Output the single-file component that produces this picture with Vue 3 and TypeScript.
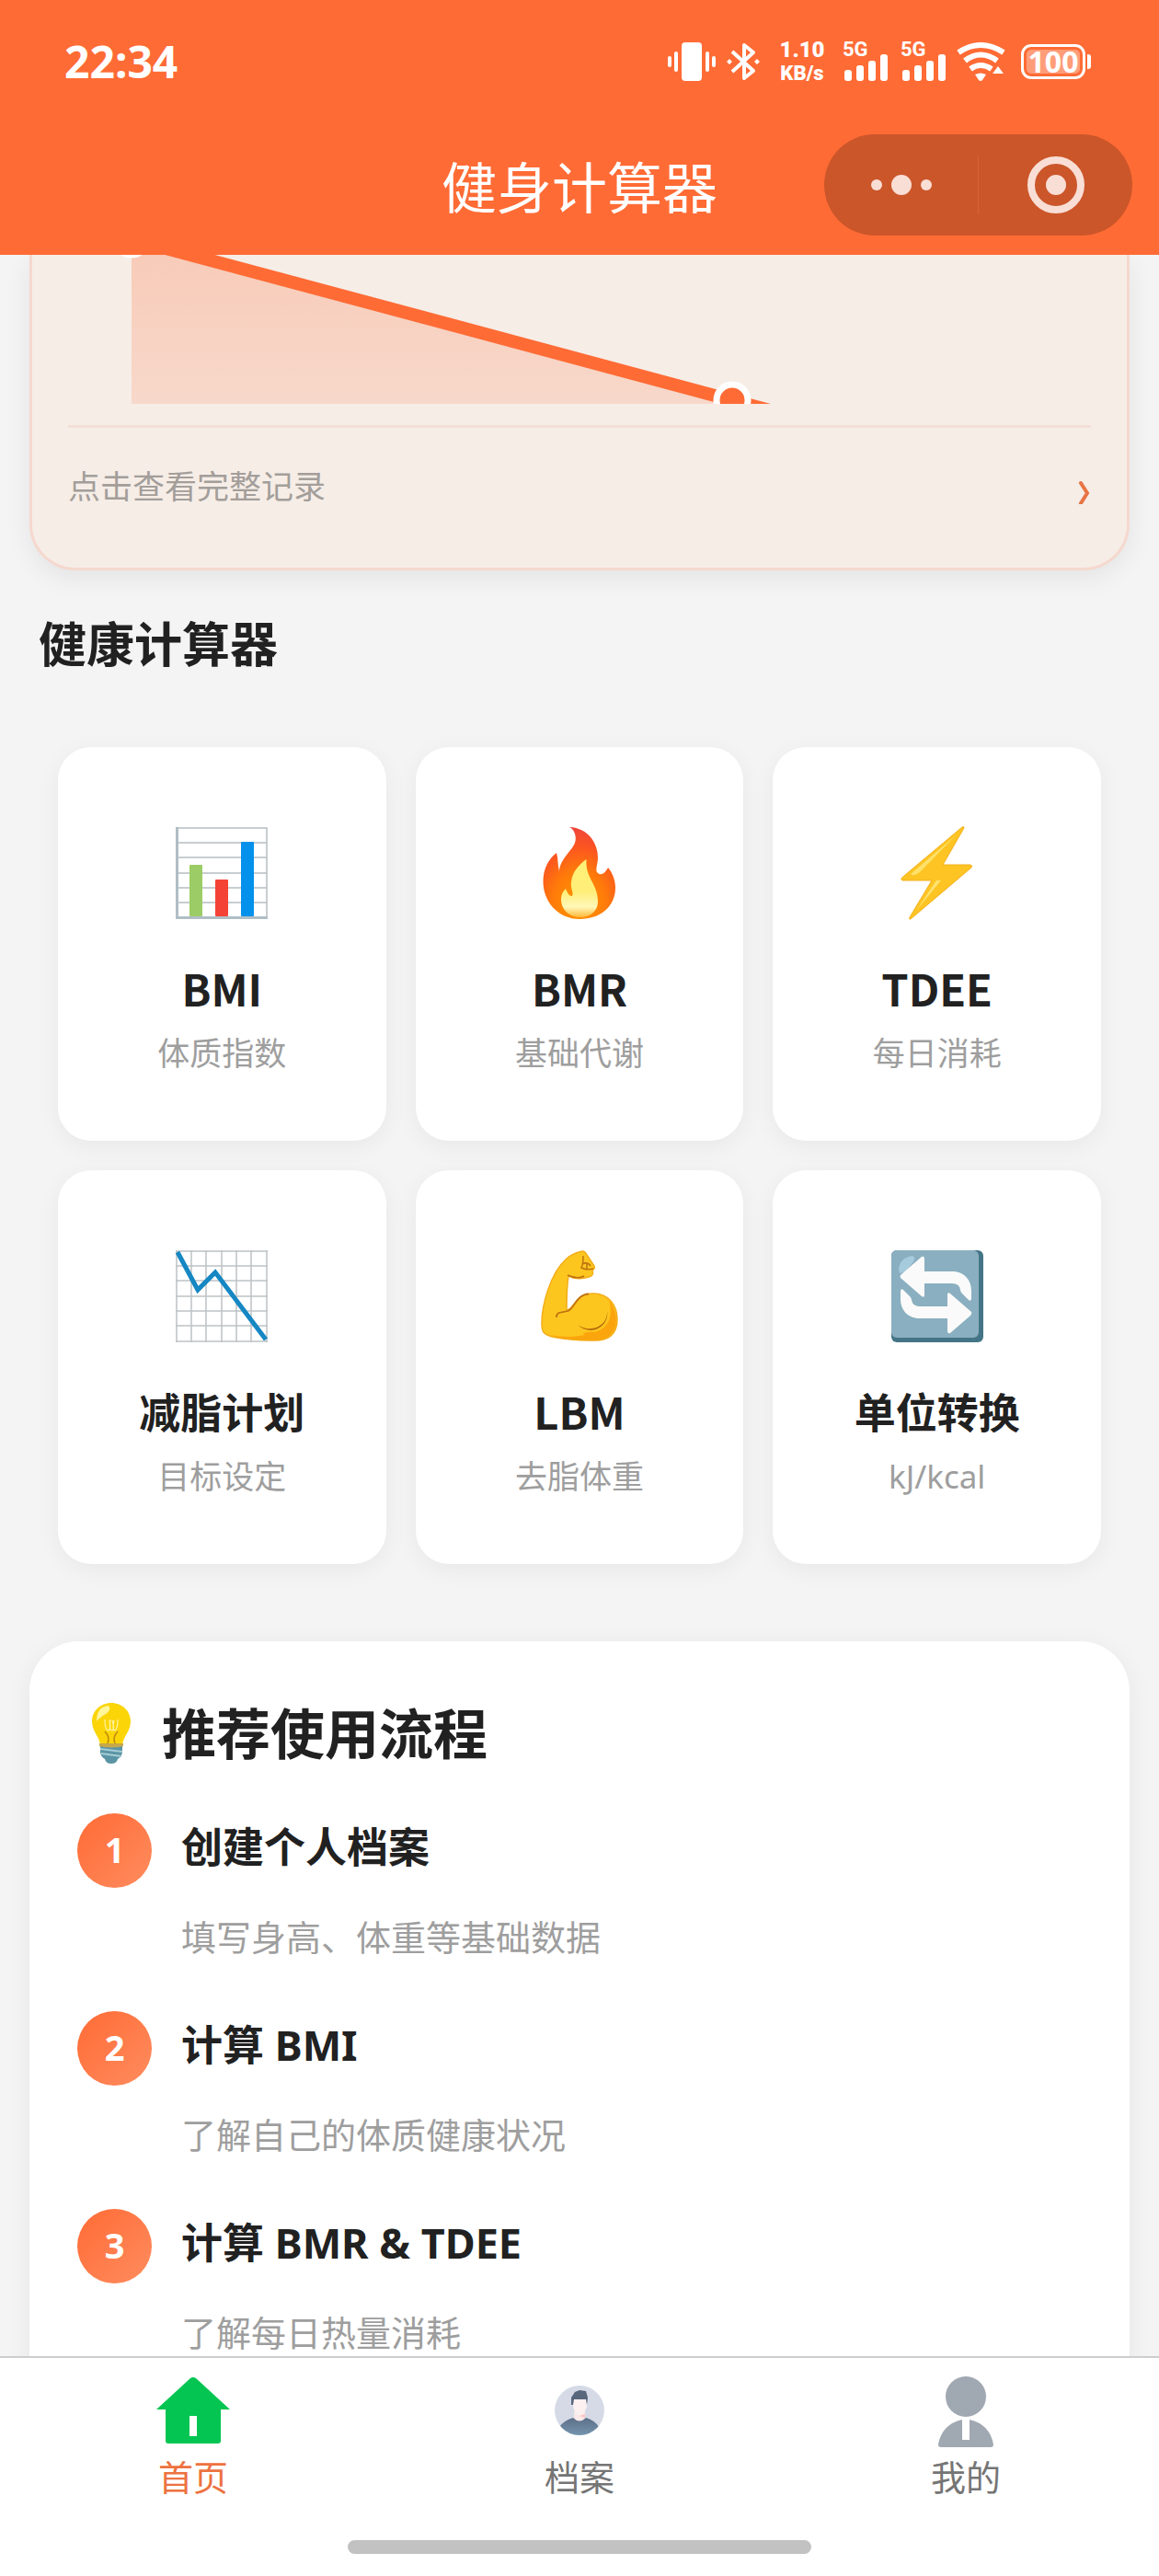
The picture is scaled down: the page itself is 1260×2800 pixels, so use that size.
<script setup lang="ts">
import { ref } from 'vue'

type IconName = 'bars' | 'fire' | 'bolt' | 'trend' | 'arm' | 'swap'

interface Tool {
  icon: IconName
  name: string
  hint: string
  latin?: boolean
}

interface Step {
  title: string
  text: string
}

interface Tab {
  key: 'home' | 'profile' | 'mine'
  label: string
}

const tools: Tool[] = [
  { icon: 'bars', name: 'BMI', hint: '体质指数', latin: true },
  { icon: 'fire', name: 'BMR', hint: '基础代谢', latin: true },
  { icon: 'bolt', name: 'TDEE', hint: '每日消耗', latin: true },
  { icon: 'trend', name: '减脂计划', hint: '目标设定' },
  { icon: 'arm', name: 'LBM', hint: '去脂体重', latin: true },
  { icon: 'swap', name: '单位转换', hint: 'kJ/kcal' },
]

const steps: Step[] = [
  { title: '创建个人档案', text: '填写身高、体重等基础数据' },
  { title: '计算 BMI', text: '了解自己的体质健康状况' },
  { title: '计算 BMR & TDEE', text: '了解每日热量消耗' },
]

const tabs: Tab[] = [
  { key: 'home', label: '首页' },
  { key: 'profile', label: '档案' },
  { key: 'mine', label: '我的' },
]

const activeTab = ref<Tab['key']>('home')
const gridLines = [1, 17, 33, 50, 66, 82, 99]
</script>

<template>
  <div class="app">
    <header class="header">
      <div class="status">
        <span class="clock">22:34</span>
        <div class="status-icons">
          <svg class="vibrate" width="52" height="42" viewBox="0 0 52 42" fill="#fff" aria-hidden="true">
            <rect x="15" y="0" width="22" height="42" rx="4" />
            <rect x="7" y="10" width="4" height="22" rx="2" />
            <rect x="41" y="10" width="4" height="22" rx="2" />
            <rect x="0" y="15" width="4" height="12" rx="2" />
            <rect x="48" y="15" width="4" height="12" rx="2" />
          </svg>
          <svg class="bluetooth" width="36" height="42" viewBox="0 0 36 42" aria-hidden="true">
            <path d="M6 10 L29 31 L19 39 V3 L29 11 L6 32" fill="none" stroke="#fff" stroke-width="4" stroke-linejoin="round" />
            <path d="M3 18 l3 3 -3 3 -3 -3z M33 18 l3 3 -3 3 -3 -3z" fill="#fff" />
          </svg>
          <span class="speed"><b>1.10</b><b>KB/s</b></span>
          <span v-for="n in 2" :key="n" class="signal">
            <b>5G</b>
            <svg width="48" height="29" viewBox="0 0 48 29" fill="#fff" aria-hidden="true">
              <rect x="0" y="17" width="8" height="12" rx="3" />
              <rect x="13" y="12" width="8" height="17" rx="3" />
              <rect x="26" y="7" width="8" height="22" rx="3" />
              <rect x="39" y="0" width="8" height="29" rx="3" />
            </svg>
          </span>
          <svg class="wifi" width="54" height="42" viewBox="0 0 54 42" aria-hidden="true">
            <g fill="none" stroke="#fff" stroke-width="6">
              <path d="M2 11 Q26 -5 51 11" />
              <path d="M9 20 Q26 7 44 20" />
              <path d="M15 29 Q26 21 38 29" />
            </g>
            <path d="M20 35 Q26 32 32 35 L28 41 Q26 43 24 41z M45 26 l6 8 h-12z" fill="#fff" />
          </svg>
          <span class="battery"><b>100</b></span>
        </div>
      </div>
      <div class="navbar">
        <h1>健身计算器</h1>
        <div class="capsule">
          <button type="button" aria-label="更多">
            <svg width="68" height="64" viewBox="0 0 68 64" fill="#f9ded5">
              <circle cx="7" cy="32" r="6" />
              <circle cx="34" cy="32" r="11" />
              <circle cx="61" cy="32" r="6" />
            </svg>
          </button>
          <button type="button" aria-label="关闭">
            <svg width="64" height="64" viewBox="0 0 64 64">
              <circle cx="32" cy="32" r="27" fill="none" stroke="#f9ded5" stroke-width="8" />
              <circle cx="32" cy="32" r="11" fill="#f9ded5" />
            </svg>
          </button>
        </div>
      </div>
    </header>

    <main class="content">
      <section class="record">
        <svg class="chart" viewBox="0 0 1112 162" aria-hidden="true">
          <defs>
            <linearGradient id="area" x1="0" y1="0" x2="0" y2="1">
              <stop offset="0" stop-color="#ff6b35" stop-opacity=".27" />
              <stop offset="1" stop-color="#ff6b35" stop-opacity=".16" />
            </linearGradient>
          </defs>
          <path d="M69 -17 L722 158 V162 H69z" fill="url(#area)" />
          <path d="M69 -17 L722 158 L800 179" fill="none" stroke="#ff6b35" stroke-width="14" />
          <circle cx="69" cy="-17" r="17" fill="#ff6b35" stroke="#fff" stroke-width="7" />
          <circle cx="722" cy="158" r="17" fill="#ff6b35" stroke="#fff" stroke-width="7" />
        </svg>
        <a class="record-link" href="#records">
          <span>点击查看完整记录</span>
          <svg width="14" height="26" viewBox="0 0 14 26" aria-hidden="true">
            <path d="M3 3 L10 14 L3 25" fill="none" stroke="#e97343" stroke-width="4" stroke-linecap="round" />
          </svg>
        </a>
      </section>

      <h2 class="section-title">健康计算器</h2>
      <div class="tools">
        <button v-for="tool in tools" :key="tool.name" type="button" class="tool">
          <svg v-if="tool.icon === 'bars'" class="tool-icon" viewBox="0 0 100 100" aria-hidden="true">
            <path d="M2 1 H99 V98 M2 17 H99 M2 33 H99 M2 50 H99 M2 66 H99 M2 82 H99" fill="none" stroke="#b5bfc3" stroke-width="1.5" />
            <path d="M1.5 0 V98.5 H100" fill="none" stroke="#b0bec5" stroke-width="3" />
            <rect x="15" y="41" width="14" height="56" rx="1" fill="#9ccc65" />
            <rect x="43" y="57" width="14" height="40" rx="1" fill="#f44336" />
            <rect x="71" y="16" width="14" height="81" rx="1" fill="#0491ec" />
          </svg>
          <svg v-else-if="tool.icon === 'fire'" class="tool-icon" viewBox="0 0 100 100" aria-hidden="true">
            <defs>
              <radialGradient id="flame" cx=".5" cy=".85" r=".85">
                <stop offset="0" stop-color="#ff9800" />
                <stop offset=".45" stop-color="#ff7a0a" />
                <stop offset=".75" stop-color="#fb5520" />
                <stop offset="1" stop-color="#f0443c" />
              </radialGradient>
              <linearGradient id="core" x1="0" y1="0" x2="0" y2="1">
                <stop offset="0" stop-color="#fff176" />
                <stop offset=".55" stop-color="#ffee78" />
                <stop offset=".82" stop-color="#fff8b8" />
                <stop offset="1" stop-color="#ffb93a" />
              </linearGradient>
            </defs>
            <path d="M39 0 C60 1 70 18 70 33 C70 40 67 46 69 49 C73 54 78 50 81 44 C86 50 89 58 89 66 C89 86 73 100 50 100 C27 100 10 81 10.5 58 C11 45 16 35 25 28 C27 34 26 41 28 48 C29 34 42 26 45 17 C47 11 45 3 39 0z" fill="url(#flame)" />
            <path d="M57.5 35 C56 56 70 61 70 81 C70 91 62 98 51 98 C38 98 30 89 30 78 C30 73 32 70 35 67 C37 71 38 75 42 75 C44 71 40 67 41 60 C42 49 49 41 57.5 35z" fill="url(#core)" />
          </svg>
          <svg v-else-if="tool.icon === 'bolt'" class="tool-icon" viewBox="0 0 100 100" aria-hidden="true">
            <path d="M79 1 L56 41 H86 Q88.5 41.5 87 44 L21 100 Q19 101 20 98 L44 58 H12 Q10 57 11.5 55 L77 0 Q79.5 -1 79 1z" fill="#fdc423" stroke="#f4b01c" stroke-width="1" />
            <path d="M70 9 L21 51 Q24 54 31 49z" fill="#ffe169" />
            <path d="M49 58 L27 91 L54 58z" fill="#ffe270" />
          </svg>
          <svg v-else-if="tool.icon === 'trend'" class="tool-icon" viewBox="0 0 100 100" aria-hidden="true">
            <g stroke="#bcc2c4" stroke-width="1.5">
              <line v-for="g in gridLines" :key="'v' + g" :x1="g" y1="0" :x2="g" y2="100" />
              <line v-for="g in gridLines" :key="'h' + g" x1="0" :y1="g" x2="100" :y2="g" />
            </g>
            <path d="M2 2 L24 43 L43 24 L98 97" fill="none" stroke="#1587c3" stroke-width="5" />
          </svg>
          <svg v-else-if="tool.icon === 'arm'" class="tool-icon" viewBox="0 0 100 100" aria-hidden="true">
            <path d="M36 9 C42 4 48 2 53 1 Q56 1 58 5 L66 17 Q67 20 64 22 Q66 28 60 29 Q48 33 38 28 Q36 40 36 65 C45 64 44 47 65 47 C82 47 91 60 91 75 C91 91 82 99 63 98 C45 98 30 96 20 94 C10 91 9 88 9 79 C9 60 18 25 36 9z" fill="#fdc61f" stroke="#f3ad17" stroke-width="1.5" />
            <path d="M82 54 C96 72 92 98 66 98 C48 98 28 96 18 92 Q38 96 56 92 C51 91 57 88 66 89 C81 85 87 73 82 54z" fill="#fba50d" />
            <path d="M25 73 C25 66 31 68 37 66 C44 65 46 48 60 47.5" fill="none" stroke="#c07410" stroke-width="1.8" />
            <path d="M48 81 C60 90 81 84 80 66 C83 82 63 95 48 81z" fill="#b56a0a" />
            <path d="M37 27 Q48 32 55 28 M54 6 Q54 16 52 19 Q58 22 65 20 M53 15 Q59 12 62 17 M58 15 V20" fill="none" stroke="#bd720e" stroke-width="1.5" />
          </svg>
          <svg v-else class="tool-icon" viewBox="0 0 100 100" aria-hidden="true">
            <rect width="100" height="100" rx="6" fill="#447587" />
            <rect width="95" height="95" rx="6" fill="#8aafc0" />
            <path d="M8 21 Q9 8 23 6 Q28 8 22 15 Q16 24 9 25z" fill="#a5cbdd" />
            <g fill="#fafafa">
              <path d="M10 30 Q9 28 11 26 L33 7 Q36 6 36 9 V23 H66 C80 23 87 33 87 44 V52 Q87 56 84 54 L77 47 Q75 45 75 43 Q74 36 66 36 H36 V49 Q36 52 33 50z" />
              <path d="M10 30 Q9 28 11 26 L33 7 Q36 6 36 9 V23 H66 C80 23 87 33 87 44 V52 Q87 56 84 54 L77 47 Q75 45 75 43 Q74 36 66 36 H36 V49 Q36 52 33 50z" transform="rotate(180 48.5 48.5)" />
            </g>
          </svg>
          <strong :class="{ latin: tool.latin }">{{ tool.name }}</strong>
          <span>{{ tool.hint }}</span>
        </button>
      </div>

      <section class="guide">
        <h2 class="guide-title">
          <svg width="74" height="66" viewBox="-16 0 74 66" aria-hidden="true">
            <path d="M9 43 H33 V54 Q32 59 28 61 Q27 66 21 66 Q15 66 14 61 Q10 59 9 54z" fill="#5b95a5" />
            <path d="M9 50 L33 53 M10 55 L32 58" stroke="#a5ccd5" stroke-width="2" />
            <path d="M21 0 C33 0 42 9 42 20 C42 31 34 36 33 46 H9 C8 36 0 31 0 20 C0 9 9 0 21 0z" fill="#fbd508" />
            <path d="M5 20 Q5 4 18 3 Q22 7 15 12 Q8 16 5 20z" fill="#fff59b" />
            <path d="M17 44 Q20 37 14 31 M25 44 Q22 37 28 31" fill="none" stroke="#c18a09" stroke-width="1.5" />
            <path d="M14 18 Q14 30 18 30 Q21 28 19 19 M20 18 Q18 30 22 30 Q25 28 22 19 M28 18 Q28 30 24 30 Q22 28 24 19" fill="none" stroke="#fff3a6" stroke-width="1.2" />
            <path d="M8 44 H34 V47 Q21 50 8 47z" fill="#c6a84a" />
          </svg>
          <span>推荐使用流程</span>
        </h2>
        <ol class="steps">
          <li v-for="(step, index) in steps" :key="step.title" class="step">
            <span class="badge">{{ index + 1 }}</span>
            <div>
              <h3>{{ step.title }}</h3>
              <p>{{ step.text }}</p>
            </div>
          </li>
        </ol>
      </section>
    </main>

    <nav class="tabbar">
      <div class="tabs">
        <a
          v-for="tab in tabs"
          :key="tab.key"
          :href="'#' + tab.key"
          :class="['tab', { active: tab.key === activeTab }]"
          @click="activeTab = tab.key"
        >
          <svg v-if="tab.key === 'home'" width="80" height="80" viewBox="0 0 80 80" aria-hidden="true">
            <path d="M37 5 Q40 3 43 5 L80 39 H70 V73 Q70 76 67 76 H13 Q10 76 10 73 V39 H0z" fill="#04c552" />
            <rect x="36" y="46" width="8" height="22" fill="#fff" />
          </svg>
          <svg v-else-if="tab.key === 'profile'" class="avatar" width="80" height="80" viewBox="0 0 80 80" aria-hidden="true">
            <defs>
              <clipPath id="disc"><circle cx="40" cy="40" r="27" /></clipPath>
              <linearGradient id="shirt" x1="0" y1="0" x2="0" y2="1">
                <stop offset="0" stop-color="#5d6f88" />
                <stop offset="1" stop-color="#7696b0" />
              </linearGradient>
            </defs>
            <circle cx="40" cy="40" r="27" fill="#d5dae6" />
            <path d="M34 42 H46 V50 Q40 56 34 50z" fill="#fbe9ea" />
            <path d="M33 26 H48 V35 Q46 44 41 46 Q34 44 33 35z" fill="#fdf0f1" />
            <path d="M39 46 L46 44 V48z" fill="#ffc9c7" />
            <path d="M31 34 V26 L35 20 L40 18 L47 19 L49 26 L48 34 L47 28 H34 L33 34z" fill="#59677d" />
            <path d="M18 58 Q23 51 33 48 Q40 55 47 48 Q57 51 61 58 V68 H18z" fill="url(#shirt)" clip-path="url(#disc)" />
          </svg>
          <svg v-else width="80" height="80" viewBox="0 0 80 80" fill="#a0a8b2" aria-hidden="true">
            <circle cx="40" cy="25" r="22" />
            <path d="M10 77 Q14 55 36 50 V72 H44 V50 Q66 55 70 77 Q70 80 67 80 H13 Q10 80 10 77z" />
          </svg>
          <span>{{ tab.label }}</span>
        </a>
      </div>
      <div class="indicator"></div>
    </nav>
  </div>
</template>

<style>
body {
  margin: 0;
}
</style>

<style scoped>
.app {
  display: flex;
  flex-direction: column;
  height: 100vh;
  overflow: hidden;
  background: #f4f4f4;
  color: #212121;
  font-family: "Noto Sans", "Noto Sans CJK SC", sans-serif;
}

button {
  border: 0;
  padding: 0;
  font: inherit;
  color: inherit;
  cursor: pointer;
}

a {
  text-decoration: none;
}

h1,
h2,
h3,
p,
ol {
  margin: 0;
  padding: 0;
}

.header {
  flex: none;
  background: #ff6b35;
  color: #fff;
}

.status {
  display: flex;
  align-items: center;
  justify-content: space-between;
  height: 134px;
  padding: 0 80px 0 70px;
}

.clock {
  font-size: 48px;
  line-height: 56px;
  font-weight: 700;
}

.status-icons {
  display: flex;
  align-items: center;
}

.bluetooth {
  margin-left: 12px;
}

.speed {
  display: flex;
  flex-direction: column;
  align-items: center;
  width: 56px;
  margin: 0 3px 0 18px;
  font: 700 24px/26px Roboto, sans-serif;
}

.speed b + b {
  font-size: 22px;
}

.signal {
  display: flex;
  flex-direction: column;
  align-items: flex-start;
  width: 50px;
  height: 42px;
  margin-left: 13px;
}

.signal b {
  height: 13px;
  font: 700 22px/16px Roboto, sans-serif;
}

.signal svg {
  margin-left: 2px;
}

.wifi {
  margin-left: 11px;
}

.battery {
  position: relative;
  display: flex;
  align-items: center;
  justify-content: center;
  box-sizing: border-box;
  width: 70px;
  height: 38px;
  margin-left: 16px;
  border: 3px solid #fff;
  border-radius: 11px;
  background: #ff9d79;
  box-shadow: inset 0 0 0 3px #ff6b35;
  font-size: 32px;
  line-height: 32px;
}

.battery::after {
  content: "";
  position: absolute;
  right: -9px;
  width: 4px;
  height: 16px;
  border-radius: 0 3px 3px 0;
  background: #fff;
}

.navbar {
  display: grid;
  grid-template-columns: 1fr auto 1fr;
  align-items: center;
  box-sizing: border-box;
  height: 143px;
  padding: 0 29px 9px;
}

.navbar h1 {
  grid-column: 2;
  padding-top: 6px;
  font-size: 60px;
  line-height: 80px;
  font-weight: 400;
}

.capsule {
  display: flex;
  align-items: center;
  justify-self: end;
  width: 335px;
  height: 110px;
  border-radius: 55px;
  background: #cb562a;
}

.capsule button {
  display: flex;
  flex: 1;
  align-items: center;
  justify-content: center;
  height: 64px;
  background: none;
}

.capsule button + button {
  border-left: 1px solid #d66336;
}

.content {
  flex: 1;
  min-height: 0;
  overflow-y: auto;
  scrollbar-width: none;
}

.record {
  margin: 0 32px;
  padding: 0 39px;
  border: 3px solid #f5d8ce;
  border-top: 0;
  border-radius: 0 0 50px 50px;
  background: #f6ede7;
  box-shadow: 0 8px 28px rgba(0, 0, 0, 0.07);
}

.chart {
  display: block;
  width: 100%;
  height: auto;
  overflow: hidden;
}

.record-link {
  display: flex;
  align-items: center;
  justify-content: space-between;
  margin-top: 23px;
  padding: 40px 0 64px;
  border-top: 3px solid #f3dfd6;
  color: #a39e9a;
  font-size: 35px;
  line-height: 48px;
}

.record-link svg {
  margin-top: 12px;
}

.section-title {
  margin: 40px 42px 72px;
  font-size: 52px;
  line-height: 80px;
  font-weight: 700;
}

.tools {
  display: grid;
  grid-template-columns: repeat(3, 1fr);
  gap: 32px;
  margin: 0 63px;
}

.tool {
  display: flex;
  flex-direction: column;
  align-items: center;
  padding: 87px 0 71px;
  border-radius: 36px;
  background: #fff;
  box-shadow: 0 6px 26px rgba(0, 0, 0, 0.05);
}

.tool-icon {
  display: block;
  width: 100px;
  height: 100px;
  overflow: visible;
}

.tool strong {
  margin: 45px 0 13px;
  font-size: 45px;
  line-height: 64px;
  font-weight: 700;
}

.tool .latin {
  margin-bottom: 17px;
  font-family: "Noto Sans CJK SC", sans-serif;
  font-size: 47px;
  line-height: 60px;
}

.tool span {
  color: #9e9e9e;
  font-size: 35px;
  line-height: 48px;
}

.guide {
  margin: 84px 32px 40px;
  padding: 58px 52px 0;
  border-radius: 54px;
  background: #fff;
  box-shadow: 0 6px 28px rgba(0, 0, 0, 0.06);
}

.guide-title {
  display: flex;
  align-items: center;
  gap: 18px;
  font-size: 59px;
  line-height: 84px;
  font-weight: 700;
}

.steps {
  margin-top: 45px;
  list-style: none;
}

.step {
  display: flex;
  align-items: flex-start;
  gap: 32px;
  padding-bottom: 53px;
}

.badge {
  flex: none;
  width: 81px;
  height: 81px;
  border-radius: 50%;
  background: linear-gradient(135deg, #ff6b35, #ff8c5f);
  color: #fff;
  font-size: 38px;
  line-height: 79px;
  font-weight: 700;
  text-align: center;
}

.step h3 {
  margin-top: 7px;
  font-size: 45px;
  line-height: 60px;
  font-weight: 700;
}

.step p {
  margin-top: 39px;
  color: #9e9e9e;
  font-size: 38px;
  line-height: 56px;
}

.tabbar {
  flex: none;
  padding: 17px 0 24px;
  border-top: 2px solid #cdcdcd;
  background: #fff;
}

.tabs {
  display: flex;
}

.tab {
  display: flex;
  flex: 1;
  flex-direction: column;
  align-items: center;
  gap: 8px;
  color: #757575;
  font-size: 38px;
  line-height: 48px;
}

.tab.active {
  color: #ed7240;
}

.indicator {
  width: 40%;
  height: 15px;
  margin: 45px auto 0;
  border-radius: 8px;
  background: #c2c2c2;
}
</style>
